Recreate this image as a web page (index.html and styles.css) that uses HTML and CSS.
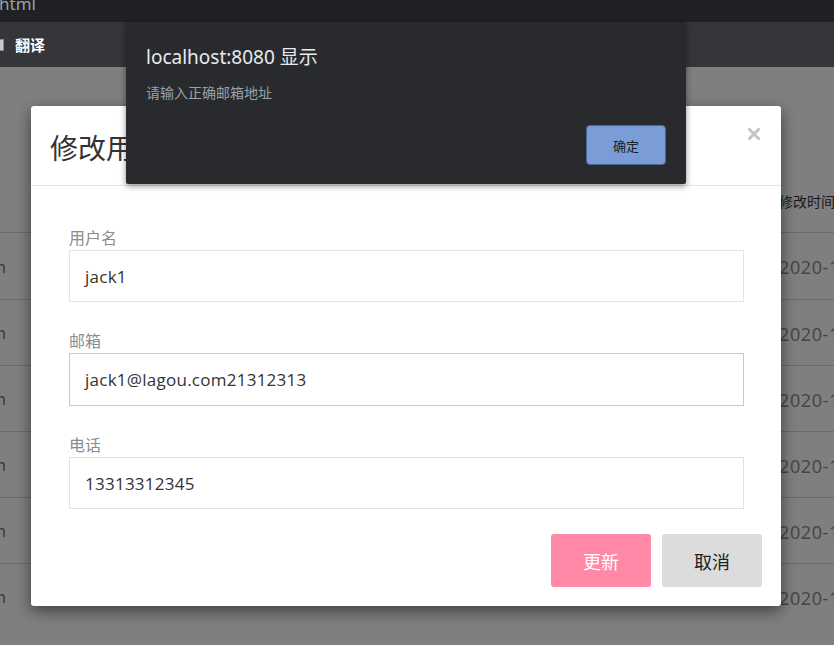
FILE: index.html
```html
<!DOCTYPE html>
<html lang="zh">
<head>
<meta charset="utf-8">
<title>html</title>
<link rel="stylesheet" href="styles.css">
</head>
<body>
<div class="titlebar"><span class="tab-title">html</span></div>
<div class="toolbar">
  <span class="tr-icon"></span>
  <span class="tr-label">翻译</span>
</div>
<main class="page">
  <div class="table">
    <div class="row head">
      <div class="cell left"></div>
      <div class="cell gap"></div>
      <div class="cell right">修改时间</div>
    </div>
    <div class="row"><div class="cell left"><span>lagou.com</span></div><div class="cell gap"></div><div class="cell right num">2020-11-20</div></div>
    <div class="row"><div class="cell left"><span>lagou.com</span></div><div class="cell gap"></div><div class="cell right num">2020-11-20</div></div>
    <div class="row"><div class="cell left"><span>lagou.com</span></div><div class="cell gap"></div><div class="cell right num">2020-11-20</div></div>
    <div class="row"><div class="cell left"><span>lagou.com</span></div><div class="cell gap"></div><div class="cell right num">2020-11-20</div></div>
    <div class="row"><div class="cell left"><span>lagou.com</span></div><div class="cell gap"></div><div class="cell right num">2020-11-20</div></div>
    <div class="row"><div class="cell left"><span>lagou.com</span></div><div class="cell gap"></div><div class="cell right num">2020-11-20</div></div>
  </div>
</main>
<div class="backdrop"></div>
<div class="modal">
  <div class="modal-header">
    <h4 class="modal-title">修改用户</h4>
    <span class="close" aria-label="close">
      <svg width="12" height="12" viewBox="0 0 12 12"><path d="M1.5 1.5 L10.5 10.5 M10.5 1.5 L1.5 10.5" stroke="#c4c4c4" stroke-width="3" stroke-linecap="square"/></svg>
    </span>
  </div>
  <div class="modal-body">
    <label class="field-label">用户名</label>
    <div class="field-input">jack1</div>
    <label class="field-label">邮箱</label>
    <div class="field-input focus">jack1@lagou.com21312313</div>
    <label class="field-label">电话</label>
    <div class="field-input">13313312345</div>
  </div>
  <div class="modal-footer">
    <button class="btn btn-primary">更新</button>
    <button class="btn btn-default">取消</button>
  </div>
</div>
<div class="alert">
  <div class="alert-title">localhost:8080 显示</div>
  <div class="alert-msg">请输入正确邮箱地址</div>
  <div class="alert-actions"><button class="alert-btn">确定</button></div>
</div>
</body>
</html>
```
FILE: styles.css
```css
* { box-sizing: border-box; }
html, body { margin: 0; padding: 0; }
body {
  width: 834px;
  height: 645px;
  overflow: hidden;
  position: relative;
  font-family: "Open Sans", "Noto Sans CJK SC", sans-serif;
  background: #fff;
}
.titlebar {
  height: 22px;
  background: #202124;
  overflow: hidden;
}
.tab-title {
  display: block;
  color: #9aa0a6;
  font-family: "Noto Sans", "Noto Sans CJK SC", sans-serif;
  font-size: 17px;
  line-height: 14px;
  margin-top: -3px;
  margin-left: -1px;
}
.toolbar {
  height: 45px;
  background: #35363a;
  display: flex;
  align-items: center;
  gap: 11px;
}
.tr-icon {
  width: 4px;
  height: 12px;
  background: #c8c8c8;
  border: 1px solid #8a8a8a;
  border-left: none;
}
.tr-label {
  color: #ffffff;
  font-family: "Noto Sans CJK SC", sans-serif;
  font-weight: 700;
  font-size: 15px;
}
.page {
  height: 578px;
  background: #fff;
  padding-top: 103px;
}
.table { display: flex; flex-direction: column; }
.row {
  display: flex;
  height: 66px;
  align-items: center;
  border-top: 1px solid #d4d4d4;
  overflow: hidden;
}
.row.head { border-top: none; height: 63px; border-bottom: 1px solid #d4d4d4; }
.row.head + .row { border-top: none; }
.cell { flex-shrink: 0; }
.cell.left {
  width: 6px;
  overflow: hidden;
  display: flex;
  justify-content: flex-end;
  white-space: nowrap;
  color: #5f6f86;
  font-size: 17px;
}
.cell.gap { width: 773px; }
.cell.right {
  white-space: nowrap;
  color: #333;
  font-family: "Noto Sans CJK SC", sans-serif;
  font-size: 14px;
}
.cell.right.num {
  color: #888;
  font-family: "Open Sans", sans-serif;
  font-size: 18px;
  letter-spacing: 0.6px;
  padding-top: 2px;
}
.backdrop {
  position: absolute;
  left: 0; top: 67px; right: 0; bottom: 0;
  background: rgba(0, 0, 0, 0.5);
}
.modal {
  position: absolute;
  left: 31px;
  top: 106px;
  width: 750px;
  height: 500px;
  background: #fff;
  border-radius: 3px;
  box-shadow: 0 5px 15px rgba(0, 0, 0, 0.5);
  display: flex;
  flex-direction: column;
}
.modal-header {
  height: 80px;
  border-bottom: 1px solid #e5e5e5;
  display: flex;
  align-items: center;
  justify-content: space-between;
  padding: 0 21px 0 19px;
}
.modal-title {
  margin: 0;
  font-family: "Noto Sans CJK SC", sans-serif;
  font-weight: 400;
  font-size: 28px;
  color: #333;
  padding-top: 2px;
}
.close {
  display: flex;
  align-self: flex-start;
  margin-top: 22px;
}
.modal-body {
  padding: 41px 37px 0 38px;
  display: flex;
  flex-direction: column;
}
.field-label {
  display: block;
  font-family: "Noto Sans CJK SC", sans-serif;
  font-size: 16px;
  line-height: 20px;
  color: #8c8c8c;
  margin-bottom: 3px;
}
.field-input {
  height: 52px;
  border: 1px solid #e3e3e3;
  padding: 0 15px;
  display: flex;
  align-items: center;
  font-family: "Open Sans", sans-serif;
  font-size: 17px;
  letter-spacing: 0.25px;
  color: #333;
  margin-bottom: 28px;
}
.field-input.focus { border-color: #c8c8c8; height: 53px; margin-bottom: 28px; }
.field-input:last-child { margin-bottom: 0; }
.modal-footer {
  display: flex;
  justify-content: flex-end;
  gap: 11px;
  padding: 25px 19px 0 0;
}
.btn {
  width: 100px;
  height: 53px;
  border: none;
  border-radius: 3px;
  font-family: "Noto Sans CJK SC", sans-serif;
  font-size: 18px;
  padding: 0;
}
.btn-primary { background: #ff88a7; color: #fff; }
.btn-default { background: #dcdcdc; color: #222; }
.alert {
  position: absolute;
  left: 126px;
  top: 22px;
  width: 560px;
  height: 162px;
  background: #292a2d;
  border-radius: 2px;
  box-shadow: 0 2px 6px rgba(0, 0, 0, 0.45);
  padding: 22px 20px 19px 20px;
  display: flex;
  flex-direction: column;
}
.alert-title {
  color: #e8eaed;
  font-family: "Noto Sans", "Noto Sans CJK SC", sans-serif;
  font-size: 19px;
  line-height: 26px;
}
.alert-msg {
  margin-top: 12px;
  color: #9aa0a6;
  font-family: "Noto Sans CJK SC", sans-serif;
  font-size: 14px;
  line-height: 20px;
}
.alert-actions {
  margin-top: auto;
  display: flex;
  justify-content: flex-end;
}
.alert-btn {
  width: 80px;
  height: 40px;
  background: #7a9dd7;
  border: 1px solid #4d6590;
  border-radius: 4px;
  color: #202124;
  font-family: "Noto Sans CJK SC", sans-serif;
  font-size: 13px;
  padding: 0;
}
```
